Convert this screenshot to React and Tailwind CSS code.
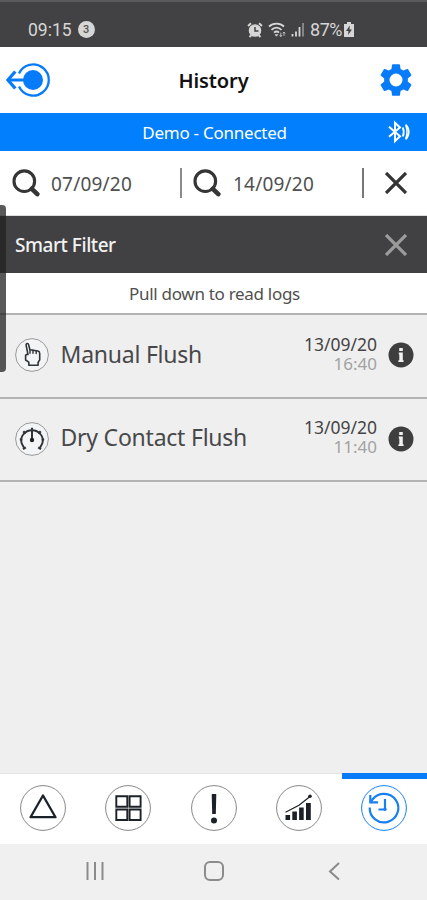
const logs = [
    { id: 1, title: "Manual Flush", date: "13/09/20", time: "16:40", icon: "hand" },
    { id: 2, title: "Dry Contact Flush", date: "13/09/20", time: "11:40", icon: "gauge" },
];

const tabs = ["alert", "grid", "warning", "chart", "history"];

const StatusBar = () => (
    <div className="h-[47px] bg-[#424244] border-t-2 border-[#5a5a5c] flex items-center pt-[10px] pl-[28px] pr-[73px] text-[#d6d6d6] font-[Roboto,sans-serif]">
        <span className="text-[17.5px] leading-5">09:15</span>
        <span className="ml-[6px] w-[17px] h-[17px] rounded-full bg-[#d6d6d6] text-[#555] text-[11px] leading-[17px] text-center font-medium">3</span>
        <svg className="ml-auto" width="16" height="16" viewBox="0 0 16 16" fill="none" stroke="currentColor">
            <circle cx="8" cy="8.5" r="5.6" fill="currentColor" strokeWidth="1.4" />
            <path d="M1 4l3-2.7M15 4l-3-2.7M2.5 15l2-2M13.5 15l-2-2" strokeWidth="1.9" />
            <path d="M8 5v4h3.4" stroke="#424244" strokeWidth="1.5" />
        </svg>
        <svg className="ml-[5px]" width="18" height="16" viewBox="0 0 18 16" fill="none" stroke="currentColor" strokeWidth="1.8">
            <path d="M1 4.5C5 .6 12 .6 16 4.5M3.5 7.8c3-3 7-3 10 0M6 10.6c1.6-1.5 3.6-1.5 5 0" />
            <path d="M7 12.5l1.5 1.8 1.5-1.8z" fill="currentColor" strokeWidth="0.5" />
            <path d="M12.8 10.5v4M11.6 13l1.2 1.6 1.2-1.6M16 14v-4M14.8 11.4L16 10l1.2 1.4" strokeWidth="0.8" />
        </svg>
        <svg className="ml-[5px]" width="14" height="15" viewBox="0 0 14 15" stroke="currentColor" strokeWidth="1.8">
            <path d="M1.5 12v2.5M5 9.5v5M8.5 5v9.5" />
            <path d="M12 1v13.5" opacity="0.5" />
        </svg>
        <span className="ml-[5px] text-[18px] leading-5 tracking-[-0.5px]">87%</span>
        <svg className="ml-[2px] shrink-0" width="10" height="15" viewBox="0 0 10 15">
            <path d="M3 0h4v2h3v13H0V2h3z" fill="currentColor" />
            <path d="M5.8 3.5L2 9h2.5l-.5 4L8 7.5H5.5z" fill="#424244" />
        </svg>
    </div>
);

const BackIcon = () => (
    <svg width="44" height="36" viewBox="0 0 44 36" fill="none" stroke="#087cf8">
        <circle cx="27" cy="18" r="10" fill="#087cf8" stroke="none" />
        <path d="M13 11.5A15.6 15.6 0 1 1 13 24.5" strokeWidth="2.3" />
        <path d="M2 18h18" strokeWidth="3" />
        <path d="M9.3 9.5L2 18l7.3 8.5" strokeWidth="3.2" />
    </svg>
);

const GearIcon = () => (
    <svg width="38" height="38" viewBox="0 0 24 24" fill="#087cf8">
        <path d="M19.43 12.98c.04-.32.07-.64.07-.98s-.03-.66-.07-.98l2.11-1.65c.19-.15.24-.42.12-.64l-2-3.46c-.12-.22-.39-.3-.61-.22l-2.49 1c-.52-.4-1.08-.73-1.69-.98l-.38-2.65C14.46 2.18 14.25 2 14 2h-4c-.25 0-.46.18-.49.42l-.38 2.65c-.61.25-1.17.59-1.69.98l-2.49-1c-.23-.09-.49 0-.61.22l-2 3.46c-.13.22-.07.49.12.64l2.11 1.65c-.04.32-.07.65-.07.98s.03.66.07.98l-2.11 1.65c-.19.15-.24.42-.12.64l2 3.46c.12.22.39.3.61.22l2.49-1c.52.4 1.08.73 1.69.98l.38 2.65c.03.24.24.42.49.42h4c.25 0 .46-.18.49-.42l.38-2.65c.61-.25 1.17-.59 1.69-.98l2.49 1c.23.09.49 0 .61-.22l2-3.46c.12-.22.07-.49-.12-.64l-2.11-1.65zM12 16.1a4.1 4.1 0 1 1 0-8.2 4.1 4.1 0 0 1 0 8.2z" />
    </svg>
);

const BluetoothIcon = () => (
    <svg width="24" height="24" viewBox="0 0 24 24" fill="none" stroke="#fff" strokeWidth="2">
        <path d="M2 6.8l11 9.4-5 5V2.8l5 4.7-11 9.3" />
        <path d="M15.8 7.5c1.2 2.8 1.2 6.2 0 9" strokeWidth="1.8" />
        <path d="M18.7 4.5c4.2 4 4.2 11 0 15M18.7 5c1.7 4.5 1.7 9.5 0 14" strokeWidth="1.5" />
    </svg>
);

const SearchIcon = () => (
    <svg className="shrink-0" width="28" height="28" viewBox="0 0 28 28" fill="none" stroke="#353535">
        <circle cx="12.3" cy="12.2" r="10.3" strokeWidth="3.1" />
        <path d="M19.8 19.8l5.5 5.3" strokeWidth="4.6" strokeLinecap="round" />
    </svg>
);

const CloseIcon = ({ color }) => (
    <svg className="shrink-0" width="22" height="22" viewBox="0 0 22 22" stroke={color} strokeWidth="3.3">
        <path d="M1 1l20 20M21 1L1 21" />
    </svg>
);

const LogIcon = ({ type }) => (
    <svg className="shrink-0" width="36" height="36" viewBox="0 0 36 36" fill="none" stroke="#303438">
        <circle cx="18" cy="18" r="16.4" fill="#f3f4f5" stroke="#999" strokeWidth="1" />
        {type === "hand" ? (
            <g strokeWidth="1.6" strokeLinejoin="round" strokeLinecap="round">
                <path d="M14 17.5L12.1 8.2c-.4-1.9 2-2.4 2.5-.6l1.3 5.2 8 1.2c1.4.3 1.8 1.2 1.8 2.6v6.2l-1.6 2.7v2.7h-9.3v-3L11.6 23v-4.8l2-1.2" />
                <path d="M16 13v3.2M19 13.3v3M22.2 14v2.6" strokeWidth="1.4" />
            </g>
        ) : (
            <g strokeWidth="1.9">
                <path d="M10 26.8L7.7 22.5C5.5 15.5 11 9.2 18 9.2s12.500 6.300 10.300 13.300L26 26.800" />
                <path d="M18 6.800v11" strokeWidth="2" />
                <circle cx="18" cy="19" r="2.200" fill="#222" stroke="none" />
                <path d="M9.300 10.300l2.200 2.500M26.700 10.300l-2.200 2.500M5.800 18.500h2.600M30.200 18.500h-2.600M9 28.200l2.800-1.900M27 28.200l-2.800-1.900" strokeWidth="2.200" />
            </g>
        )}
    </svg>
);

const InfoIcon = () => (
    <svg className="shrink-0" width="26" height="26" viewBox="0 0 26 26">
        <circle cx="13" cy="13" r="12.5" fill="#3e3e3f" />
        <path d="M11.2 6h3.6v3h-3.6zM10.8 10.6h4v7.6h.8v1.8h-5.200v-1.800h.9v-5.800h-.5z" fill="#f0f0f0" />
    </svg>
);

const TabIcon = ({ type }) => {
    const active = type === "history";
    return (
        <svg width="48" height="48" viewBox="0 0 48 48" fill="none" stroke={active ? "#1680f0" : "#1b2127"}>
            <circle cx="24" cy="24" r="22.4" stroke={active ? "#1680f0" : "#888"} strokeWidth="1" />
            {type === "alert" && <path d="M24 11.5L36.5 33.2H11.5z" strokeWidth="2.3" strokeLinejoin="round" />}
            {type === "grid" && (
                <path d="M12.3 12.3h11v10.5h-11zM25.6 12.3h11v10.5h-11zM12.3 25.5h11V36h-11zM25.6 25.5h11V36h-11z" strokeWidth="1.9" />
            )}
            {type === "warning" && (
                <g fill="#1b2127" stroke="none">
                    <path d="M21.7 10h4.6l-.5 20h-3.6z" />
                    <circle cx="24" cy="36.5" r="3" />
                </g>
            )}
            {type === "chart" && (
                <g>
                    <path d="M10.5 31h4.6v5h-4.6zM17.3 27.5h4.6V36h-4.6zM24.1 23.5h4.6V36h-4.6zM31 19h4.8v17H31z" fill="#1b2127" stroke="none" />
                    <path d="M10.5 28.3L24 21.2 35 12.5" strokeWidth="1.2" />
                    <circle cx="35" cy="12.3" r="1.8" fill="#1b2127" stroke="none" />
                </g>
            )}
            {active && (
                <g strokeWidth="2.2">
                    <path d="M9.7 23.5a14.3 14.3 0 1 0 3-8.2L10.5 18" />
                    <path d="M10.3 11v7.4h7.8" />
                    <path d="M25 15v10.5h-6.5" />
                    <circle cx="25" cy="25.2" r="1.6" fill="#1680f0" stroke="none" />
                </g>
            )}
        </svg>
    );
};

const LogRow = ({ log }) => (
    <div className="h-[83.5px] border-b-2 border-[#b3b3b3] flex items-center pl-[14px] pr-[13px] pb-px">
        <LogIcon type={log.icon} />
        <h3 className="ml-[10.5px] pb-[3px] text-[23px] leading-7 tracking-[-0.23px] text-[#48484a] whitespace-nowrap">{log.title}</h3>
        <div className="ml-auto mr-[11px] pb-[3px] text-right">
            <p className="text-[17.5px] leading-[19px] text-[#454545]">{log.date}</p>
            <p className="text-[17px] leading-[19px] text-[#a2a2a2]">{log.time}</p>
        </div>
        <InfoIcon />
    </div>
);

const App = () => {
    return (
        <div className="relative w-full h-[900px] flex flex-col overflow-hidden bg-[#efefef] font-['Noto_Sans',sans-serif]">
            <StatusBar />

            <header className="h-[66px] bg-white flex items-center justify-between pl-[6px] pr-[12px]">
                <BackIcon />
                <h1 className="pt-[2px] text-[20px] font-semibold tracking-[-0.1px] text-[#111]">History</h1>
                <GearIcon />
            </header>

            <div className="h-[38px] bg-[#027ffd] flex items-center pl-[42px] pr-[16px] text-white">
                <span className="flex-1 pt-px text-center text-[17px] leading-6 tracking-[-0.25px]">Demo - Connected</span>
                <BluetoothIcon />
            </div>

            <div className="h-[65px] bg-white flex items-center pl-[12px] pr-[20px] text-[19px] text-[#505050] border-b border-[#ddd]">
                <SearchIcon />
                <span className="ml-[11px] w-[129px] pt-[2px] tracking-[0.2px]">07/09/20</span>
                <span className="w-[2px] h-[30px] bg-[#8b8b8b]" />
                <span className="ml-[11px] flex"><SearchIcon /></span>
                <span className="ml-[12px] w-[129px] pt-[2px] tracking-[0.2px]">14/09/20</span>
                <span className="w-[2px] h-[30px] bg-[#777] mr-auto" />
                <CloseIcon color="#353535" />
            </div>

            <div className="h-[57px] bg-[#414143] flex items-center justify-between pl-[15px] pr-[20px]">
                <h2 className="pt-[2px] text-[19px] font-medium tracking-[-0.45px] text-[#f2f2f2]">Smart Filter</h2>
                <CloseIcon color="#9b9b9b" />
            </div>

            <p className="h-[42px] bg-white border-b-2 border-[#b3b3b3] pl-[2px] text-center text-[17px] leading-[41px] tracking-[-0.3px] text-[#505050]">Pull down to read logs</p>

            <main className="flex-1">
                {logs.map((log) => (
                    <LogRow key={log.id} log={log} />
                ))}
            </main>

            <nav className="h-[71px] bg-white flex">
                {tabs.map((tab) => (
                    <button key={tab} className={tab === "history" ? "flex-1 flex justify-center border-t-[6px] border-[#087cf8] pt-[5px]" : "flex-1 flex justify-center border-t border-[#e4e4e4] pt-[10px]"}>
                        <TabIcon type={tab} />
                    </button>
                ))}
            </nav>

            <footer className="h-[56px] bg-[#f0f0f0] flex items-center justify-between pl-[84px] pr-[87px] pb-[2px]">
                <svg width="22" height="22" viewBox="0 0 22 22" stroke="#8b8b8b" strokeWidth="2">
                    <path d="M3.5 2v18M11 2v18M18.5 2v18" />
                </svg>
                <svg className="-ml-[6px]" width="22" height="22" viewBox="0 0 22 22" fill="none" stroke="#8b8b8b" strokeWidth="2">
                    <rect x="2" y="2" width="18" height="18" rx="5" />
                </svg>
                <svg width="12" height="20" viewBox="0 0 12 20" fill="none" stroke="#8b8b8b" strokeWidth="2">
                    <path d="M11 2L2 10.5l9 8" />
                </svg>
            </footer>

            {/* edge panel handle */}
            <div className="absolute left-0 top-[205px] w-[6px] h-[167px] rounded-r-[4px] bg-[#222]/75" />
        </div>
    );
};

export default App;
